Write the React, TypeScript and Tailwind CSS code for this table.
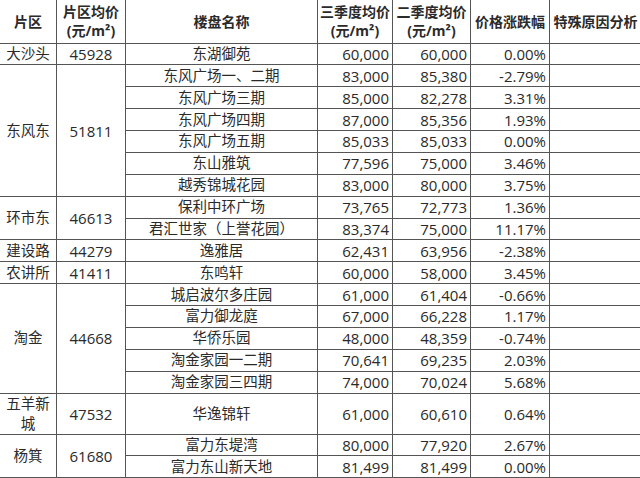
import React from "react"

interface Row {
  area?: string
  areaPrice?: string
  span?: number
  name: string
  q3: string
  q2: string
  change: string
  tall?: boolean
}

const rows: Row[] = [
  { area: "大沙头", areaPrice: "45928", span: 1, name: "东湖御苑", q3: "60,000", q2: "60,000", change: "0.00%" },
  { area: "东风东", areaPrice: "51811", span: 6, name: "东风广场一、二期", q3: "83,000", q2: "85,380", change: "-2.79%" },
  { name: "东风广场三期", q3: "85,000", q2: "82,278", change: "3.31%" },
  { name: "东风广场四期", q3: "87,000", q2: "85,356", change: "1.93%" },
  { name: "东风广场五期", q3: "85,033", q2: "85,033", change: "0.00%" },
  { name: "东山雅筑", q3: "77,596", q2: "75,000", change: "3.46%" },
  { name: "越秀锦城花园", q3: "83,000", q2: "80,000", change: "3.75%" },
  { area: "环市东", areaPrice: "46613", span: 2, name: "保利中环广场", q3: "73,765", q2: "72,773", change: "1.36%" },
  { name: "君汇世家（上誉花园）", q3: "83,374", q2: "75,000", change: "11.17%" },
  { area: "建设路", areaPrice: "44279", span: 1, name: "逸雅居", q3: "62,431", q2: "63,956", change: "-2.38%" },
  { area: "农讲所", areaPrice: "41411", span: 1, name: "东鸣轩", q3: "60,000", q2: "58,000", change: "3.45%" },
  { area: "淘金", areaPrice: "44668", span: 5, name: "城启波尔多庄园", q3: "61,000", q2: "61,404", change: "-0.66%" },
  { name: "富力御龙庭", q3: "67,000", q2: "66,228", change: "1.17%" },
  { name: "华侨乐园", q3: "48,000", q2: "48,359", change: "-0.74%" },
  { name: "淘金家园一二期", q3: "70,641", q2: "69,235", change: "2.03%" },
  { name: "淘金家园三四期", q3: "74,000", q2: "70,024", change: "5.68%" },
  { area: "五羊新城", areaPrice: "47532", span: 1, name: "华逸锦轩", q3: "61,000", q2: "60,610", change: "0.64%", tall: true },
  { area: "杨箕", areaPrice: "61680", span: 2, name: "富力东堤湾", q3: "80,000", q2: "77,920", change: "2.67%" },
  { name: "富力东山新天地", q3: "81,499", q2: "81,499", change: "0.00%" },
]

const cell = "border border-[#555] p-0 align-middle leading-[18px]"
const cjk = "text-[14.5px] text-center"
const num = "text-[15px] text-right pr-[3px]"

export default function App() {
  return (
    <div
      className="w-[640px] h-[478px] overflow-hidden bg-white text-[#2a2a2a]"
      style={{ fontFamily: '"Open Sans", "Noto Sans CJK SC", sans-serif' }}
    >
      <table className="table-fixed border-collapse -ml-px -mt-px w-[642px]">
        <colgroup>
          <col className="w-[57px]" />
          <col className="w-[69px]" />
          <col className="w-[192px]" />
          <col className="w-[75px]" />
          <col className="w-[78px]" />
          <col className="w-[79px]" />
          <col className="w-[92px]" />
        </colgroup>
        <thead>
          <tr className="h-[43.5px] font-bold text-[14px] text-center">
            <th className={`${cell} leading-[19px]`}>片区</th>
            <th className={`${cell} leading-[19px]`}>
              片区均价
              <br />
              (元/m²)
            </th>
            <th className={`${cell} leading-[19px]`}>楼盘名称</th>
            <th className={`${cell} leading-[19px]`}>
              三季度均价
              <br />
              (元/m²)
            </th>
            <th className={`${cell} leading-[19px]`}>
              二季度均价
              <br />
              (元/m²)
            </th>
            <th className={`${cell} leading-[19px]`}>价格涨跌幅</th>
            <th className={`${cell} leading-[19px]`}>特殊原因分析</th>
          </tr>
        </thead>
        <tbody>
          {rows.map((r, i) => (
            <tr key={i} className={r.tall ? "h-[41px]" : "h-[21.875px]"}>
              {r.area && (
                <td rowSpan={r.span} className={`${cell} ${cjk}`}>
                  {r.area === "五羊新城" ? (
                    <span className="block leading-[20px]">
                      五羊新
                      <br />
                      城
                    </span>
                  ) : (
                    r.area
                  )}
                </td>
              )}
              {r.areaPrice && (
                <td rowSpan={r.span} className={`${cell} text-[15px] text-center`}>
                  {r.areaPrice}
                </td>
              )}
              <td className={`${cell} ${cjk}`}>{r.name}</td>
              <td className={`${cell} ${num}`}>{r.q3}</td>
              <td className={`${cell} ${num}`}>{r.q2}</td>
              <td className={`${cell} ${num}`}>{r.change}</td>
              <td className={cell}></td>
            </tr>
          ))}
        </tbody>
      </table>
    </div>
  )
}
